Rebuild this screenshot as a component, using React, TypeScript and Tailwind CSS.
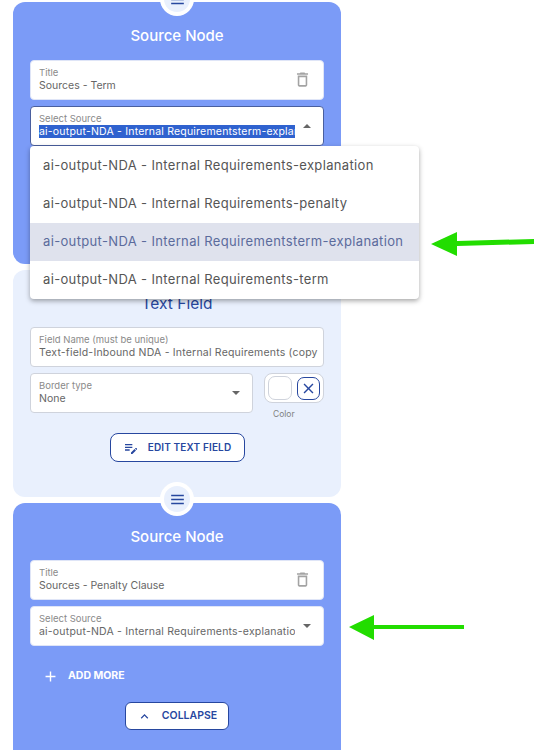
const font = { fontFamily: '"Inter", "Open Sans", sans-serif' }

const options = [
  "ai-output-NDA - Internal Requirements-explanation",
  "ai-output-NDA - Internal Requirements-penalty",
  "ai-output-NDA - Internal Requirementsterm-explanation",
  "ai-output-NDA - Internal Requirements-term",
]

function Icon({ d, className }: { d: string; className: string }) {
  return (
    <svg viewBox="0 0 24 24" className={className} fill="currentColor">
      <path d={d} />
    </svg>
  )
}

const trash =
  "M6 19c0 1.1.9 2 2 2h8c1.1 0 2-.9 2-2V7H6v12zM8 9h8v10H8V9zm7.5-5l-1-1h-5l-1 1H5v2h14V4z"
const editNote =
  "M3 10h11v2H3zm0-2h11V6H3zm0 8h7v-2H3zm15.01-3.13.71-.71c.39-.39 1.02-.39 1.41 0l.71.71c.39.39.39 1.02 0 1.41l-.71.71zm-.71.71-5.3 5.3V21h2.12l5.3-5.3z"
const menu = "M4 18h16v-2H4v2zm0-5h16v-2H4v2zm0-7v2h16V6H4z"
const plus = "M19 13h-6v6h-2v-6H5v-2h6V5h2v6h6v2z"
const chevronUp = "M12 8l-6 6 1.41 1.41L12 10.83l4.59 4.58L18 14z"
const close =
  "M19 6.41 17.59 5 12 10.59 6.41 5 5 6.41 10.59 12 5 17.59 6.41 19 12 13.41 17.59 19 19 17.59 13.41 12z"

function Caret({ up }: { up?: boolean }) {
  return (
    <svg viewBox="0 0 8 4" className="h-[4px] w-[8px] text-[#666]" fill="currentColor">
      <path d={up ? "M0 4 4 0l4 4z" : "M0 0l4 4 4-4z"} />
    </svg>
  )
}

function Field({
  label,
  value,
  right,
  selected,
  focused,
  outlined,
  wide,
  className = "",
}: {
  label: string
  value: string
  right?: React.ReactNode
  selected?: boolean
  focused?: boolean
  outlined?: boolean
  wide?: boolean
  className?: string
}) {
  return (
    <div
      className={`flex h-10 items-center rounded bg-white pl-[8px] ${
        focused
          ? "border border-[#4a5f9e]"
          : outlined
            ? "border border-[#cfd3dc]"
            : "border border-[#dfe5f7]"
      } ${className}`}
    >
      <div className="min-w-0 flex-1 overflow-hidden">
        <div className="truncate text-[9.5px] leading-[12px] text-[#8a8a8a]">{label}</div>
        <div
          className={`overflow-hidden whitespace-nowrap text-[10.5px] leading-[14px] text-[#666] ${
            wide ? "tracking-[0.2px]" : ""
          }`}
        >
          <span className={selected ? "bg-[#2f62cf] text-white" : ""}>{value}</span>
        </div>
      </div>
      {right}
    </div>
  )
}

function Handle() {
  return (
    <div className="flex size-[34px] items-center justify-center rounded-full bg-white">
      <div className="flex size-[26px] items-center justify-center rounded-full bg-[#e9f0fd]">
        <Icon d={menu} className="size-[19px] text-[#27479f]" />
      </div>
    </div>
  )
}

function SourceCard({
  height,
  titleGap,
  title,
  select,
  selected,
  focused,
  caretUp,
  children,
}: {
  height: string
  titleGap: string
  title: string
  select: string
  selected?: boolean
  focused?: boolean
  caretUp?: boolean
  children?: React.ReactNode
}) {
  return (
    <section className={`flex flex-col rounded-[12px] bg-[#7b9bf7] px-[17px] pt-[24px] ${height}`}>
      <h2 className="text-center text-[15px] font-medium leading-[20px] text-white">Source Node</h2>
      <Field
        className={titleGap}
        label="Title"
        value={title}
        right={<Icon d={trash} className="mb-[1px] mr-[11px] size-[19px] text-[#a3a3a3]" />}
      />
      <Field
        className="mt-[6px]"
        label="Select Source"
        value={select}
        selected={selected}
        focused={focused}
        wide
        right={
          <div className="flex w-[28px] shrink-0 justify-center pb-[1px] pr-[4px]">
            <Caret up={caretUp} />
          </div>
        }
      />
      {children}
    </section>
  )
}

export default function App() {
  return (
    <div className="relative h-[750px] w-[534px] overflow-hidden bg-white" style={font}>
      <div className="flex w-[328px] translate-x-[13px] flex-col gap-[6px] pt-[2px]">
        <SourceCard
          height="h-[262px]"
          titleGap="mt-[14px]"
          title="Sources - Term"
          select="ai-output-NDA - Internal Requirementsterm-explanation"
          selected
          focused
          caretUp
        />

        <section className="flex h-[227px] flex-col rounded-[12px] bg-[#e9f0fd] px-[17px] pt-[24px]">
          <h2 className="text-center text-[15.5px] leading-[20px] text-[#27479f]">Text Field</h2>
          <Field
            className="mt-[13px]"
            outlined
            wide
            label="Field Name (must be unique)"
            value="Text-field-Inbound NDA - Internal Requirements (copy"
          />
          <div className="mt-[6px] flex gap-[11px]">
            <Field
              className="w-[223px]"
              outlined
              label="Border type"
              value="None"
              right={
                <div className="flex w-[33px] justify-center pb-[1px]">
                  <Caret />
                </div>
              }
            />
            <div className="flex flex-col">
              <div className="flex h-[30px] w-[60px] items-center justify-center gap-[5px] rounded-[8px] border border-[#cfd3dc] bg-white">
                <div className="size-[24px] rounded-[7px] border border-[#cfd3dc] bg-white" />
                <div className="flex size-[23px] items-center justify-center rounded-[7px] border border-[#27479f] text-[#27479f]">
                  <Icon d={close} className="size-[17px]" />
                </div>
              </div>
              <span className="ml-[9px] mt-[5px] text-[8.5px] leading-[12px] text-[#808080]">Color</span>
            </div>
          </div>
          <div className="mt-[13px] flex justify-center">
            <button className="flex h-[29px] w-[135px] items-center justify-center gap-[9px] rounded-[8px] border border-[#27479f] bg-white text-[10px] font-semibold tracking-[0.15px] text-[#27479f]">
              <Icon d={editNote} className="size-[16px]" />
              EDIT TEXT FIELD
            </button>
          </div>
        </section>

        <SourceCard
          height="h-[260px]"
          titleGap="mt-[13px]"
          title="Sources - Penalty Clause"
          select="ai-output-NDA - Internal Requirements-explanation"
        >
          <div className="mt-[20px] flex h-[20px] items-center pl-[12px] text-[10.5px] font-bold text-white">
            <Icon d={plus} className="mr-[9px] size-[17px]" />
            ADD MORE
          </div>
          <div className="mt-[16px] flex justify-center">
            <button className="flex h-[28px] w-[104px] items-center justify-center gap-[10px] rounded-[6px] border border-[#27479f] bg-white text-[10.5px] font-semibold text-[#27479f]">
              <Icon d={chevronUp} className="size-[15px]" />
              COLLAPSE
            </button>
          </div>
        </SourceCard>
      </div>

      {/* handles sit on the card edges */}
      <div className="absolute left-[160px] top-[-18px]">
        <Handle />
      </div>
      <div className="absolute left-[160px] top-[482px]">
        <Handle />
      </div>

      {/* open select menu */}
      <ul className="absolute left-[30px] top-[146px] w-[389px] rounded bg-white pt-[1px] shadow-[0_2px_5px_rgba(0,0,0,0.35)]">
        {options.map((option, index) => (
          <li
            key={option}
            className={`flex h-[38px] items-center pl-[13px] text-[13px] tracking-[0.35px] ${
              index === 2 ? "bg-[#dfe2ed] text-[#5b6b9c]" : "text-[#555]"
            }`}
          >
            {option}
          </li>
        ))}
      </ul>

      {/* annotation arrows */}
      <svg className="absolute left-[431px] top-[230px] h-[28px] w-[103px]" viewBox="0 0 103 28">
        <path d="M0 14 26 2v9l77-2v5l-77 2v10z" fill="#22dd00" />
      </svg>
      <svg className="absolute left-[349px] top-[614px] h-[27px] w-[115px]" viewBox="0 0 115 27">
        <path d="M0 13 25 1v10h90v4H25v11z" fill="#22dd00" />
      </svg>
    </div>
  )
}
